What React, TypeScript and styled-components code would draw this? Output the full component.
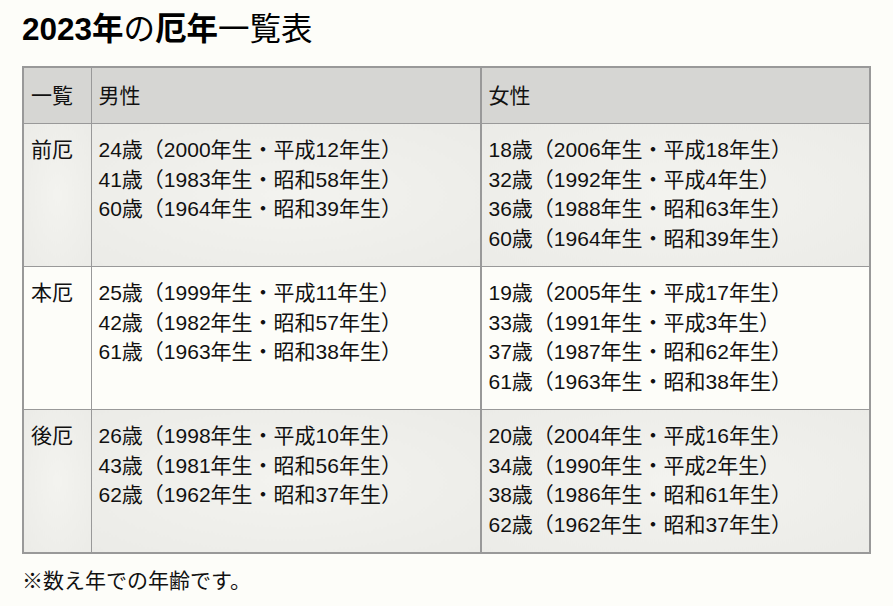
import React from "react"
import styled, { createGlobalStyle } from "styled-components"

const GlobalStyle = createGlobalStyle`
  html, body {
    margin: 0;
    padding: 0;
    background: #fdfdf9;
  }
  body {
    font-family: "Liberation Sans", "Noto Sans CJK JP", sans-serif;
    color: #111;
  }
`

type Row = {
  label: string
  male: string[]
  female: string[]
  shaded: boolean
}

const rows: Row[] = [
  {
    label: "前厄",
    shaded: true,
    male: [
      "24歳（2000年生・平成12年生）",
      "41歳（1983年生・昭和58年生）",
      "60歳（1964年生・昭和39年生）",
    ],
    female: [
      "18歳（2006年生・平成18年生）",
      "32歳（1992年生・平成4年生）",
      "36歳（1988年生・昭和63年生）",
      "60歳（1964年生・昭和39年生）",
    ],
  },
  {
    label: "本厄",
    shaded: false,
    male: [
      "25歳（1999年生・平成11年生）",
      "42歳（1982年生・昭和57年生）",
      "61歳（1963年生・昭和38年生）",
    ],
    female: [
      "19歳（2005年生・平成17年生）",
      "33歳（1991年生・平成3年生）",
      "37歳（1987年生・昭和62年生）",
      "61歳（1963年生・昭和38年生）",
    ],
  },
  {
    label: "後厄",
    shaded: true,
    male: [
      "26歳（1998年生・平成10年生）",
      "43歳（1981年生・昭和56年生）",
      "62歳（1962年生・昭和37年生）",
    ],
    female: [
      "20歳（2004年生・平成16年生）",
      "34歳（1990年生・平成2年生）",
      "38歳（1986年生・昭和61年生）",
      "62歳（1962年生・昭和37年生）",
    ],
  },
]

const App: React.FC = () => {
  return (
    <Page>
      <GlobalStyle />
      <Title>
        <b>2023年</b>の<b>厄年</b>一覧表
      </Title>

      <Table>
        <colgroup>
          <col style={{ width: 68 }} />
          <col />
          <col />
        </colgroup>
        <thead>
          <tr>
            <HeadCell>一覧</HeadCell>
            <HeadCell>男性</HeadCell>
            <HeadCell>女性</HeadCell>
          </tr>
        </thead>
        <tbody>
          {rows.map((row) => (
            <BodyRow key={row.label} $shaded={row.shaded}>
              <Cell>{row.label}</Cell>
              <Cell>
                {row.male.map((line) => (
                  <Line key={line}>{line}</Line>
                ))}
              </Cell>
              <Cell>
                {row.female.map((line) => (
                  <Line key={line}>{line}</Line>
                ))}
              </Cell>
            </BodyRow>
          ))}
        </tbody>
      </Table>

      <Note>※数え年での年齢です。</Note>
    </Page>
  )
}

export default App

const Page = styled.div`
  padding: 0 22px;
  font-size: 21px;
  line-height: 29.5px;
`

const Title = styled.h1`
  margin: 0;
  padding: 10px 0 18px;
  font-size: 31.5px;
  line-height: 38px;
  font-weight: normal;
  color: #000;

  b {
    font-weight: bold;
  }
`

const Table = styled.table`
  width: 849px;
  table-layout: fixed;
  border-collapse: collapse;
  border: 2px solid #999;
`

const HeadCell = styled.th`
  height: 55px;
  padding: 0 7px;
  text-align: left;
  font-weight: normal;
  background: #d6d6d3;
  border: 1px solid #999;
  border-right-width: 2px;
  border-bottom-width: 1px;

  &:first-child {
    border-right-width: 1px;
  }
`

const BodyRow = styled.tr<{ $shaded: boolean }>`
  td {
    background: ${(p) =>
      p.$shaded
        ? "radial-gradient(ellipse at 50% 50%, #f3f3ef 0%, #ebebe7 100%)"
        : "#fdfdf9"};
  }
`

const Cell = styled.td`
  height: 143px;
  box-sizing: border-box;
  padding: 11px 7px;
  vertical-align: top;
  border: 1px solid #999;
  border-right-width: 2px;

  &:first-child {
    border-right-width: 1px;
  }
`

const Line = styled.div`
  white-space: nowrap;
`

const Note = styled.p`
  margin: 12px 0 0;
`
